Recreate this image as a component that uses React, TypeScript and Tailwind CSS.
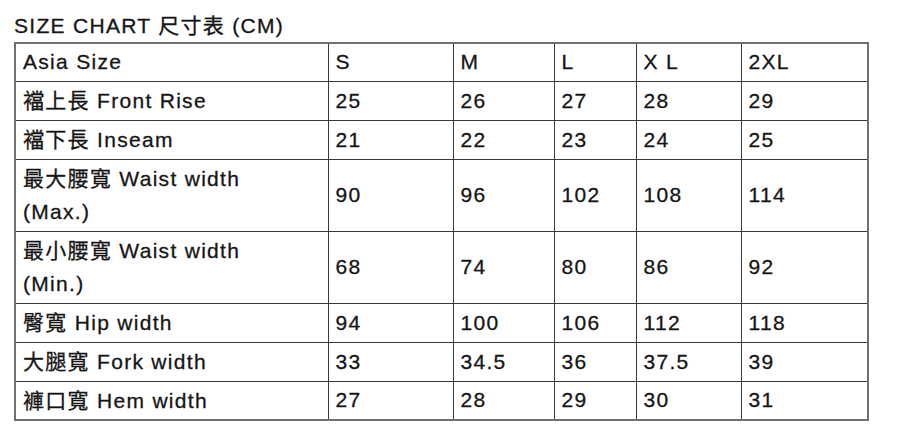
const sizes = ['S', 'M', 'L', 'X L', '2XL'];

const rows: { label: string[]; values: string[]; tall?: boolean }[] = [
  { label: ['襠上長 Front Rise'], values: ['25', '26', '27', '28', '29'] },
  { label: ['襠下長 Inseam'], values: ['21', '22', '23', '24', '25'] },
  { label: ['最大腰寬 Waist width', '(Max.)'], values: ['90', '96', '102', '108', '114'], tall: true },
  { label: ['最小腰寬 Waist width', '(Min.)'], values: ['68', '74', '80', '86', '92'], tall: true },
  { label: ['臀寬 Hip width'], values: ['94', '100', '106', '112', '118'] },
  { label: ['大腿寬 Fork width'], values: ['33', '34.5', '36', '37.5', '39'] },
  { label: ['褲口寬 Hem width'], values: ['27', '28', '29', '30', '31'] },
];

const cell = 'border border-[#3a3a3a] pl-[7px] leading-[24px] align-middle';

export default function App() {
  return (
    <div className="w-[900px] h-[434px] bg-white text-[#151515] font-['Liberation_Sans','Noto_Sans_CJK_TC',sans-serif] text-[21px] tracking-[1.3px] [-webkit-text-stroke:0.3px_#151515]">
      <div className="h-[42px] pl-[14px] pt-[12px] leading-[28px]">SIZE CHART 尺寸表 (CM)</div>
      <table className="ml-[14px] border-collapse border-2 border-[#707070] table-fixed w-[853px]">
        <colgroup>
          <col className="w-[313px]" />
          <col className="w-[125px]" />
          <col className="w-[101px]" />
          <col className="w-[82px]" />
          <col className="w-[105px]" />
          <col className="w-[127px]" />
        </colgroup>
        <tbody>
          <tr className="h-[38px]">
            <td className={cell}>Asia Size</td>
            {sizes.map((s) => (
              <td key={s} className={cell}>
                {s}
              </td>
            ))}
          </tr>
          {rows.map((r) => (
            <tr key={r.label[0]} className={r.tall ? 'h-[72px]' : 'h-[39px]'}>
              <td className="border border-[#3a3a3a] pl-[7px] leading-[33px] align-middle">
                {r.label.map((l) => (
                  <div key={l}>{l}</div>
                ))}
              </td>
              {r.values.map((v, i) => (
                <td key={i} className={cell}>
                  {v}
                </td>
              ))}
            </tr>
          ))}
        </tbody>
      </table>
    </div>
  );
}
